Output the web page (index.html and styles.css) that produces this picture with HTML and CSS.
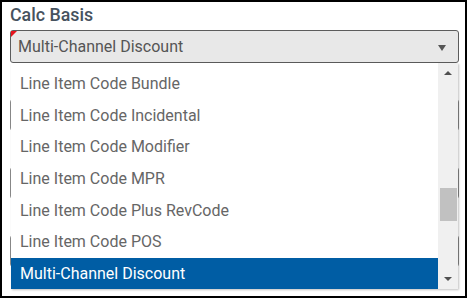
FILE: index.html
```html
<!DOCTYPE html>
<html>
<head>
    <title>Calc Basis</title>
    <link rel="stylesheet" href="styles.css">
</head>
<body>
    <div class="page">
        <div class="field-label">Calc Basis</div>
        <div class="select-wrap">
            <div class="select required">
                <span class="select-value">Multi-Channel Discount</span>
                <span class="caret"></span>
            </div>

            <!-- open option list, drawn over the fields below -->
            <div class="dropdown">
                <ul class="options">
                    <li>Line Item Code Bundle</li>
                    <li>Line Item Code Incidental</li>
                    <li>Line Item Code Modifier</li>
                    <li>Line Item Code MPR</li>
                    <li>Line Item Code Plus RevCode</li>
                    <li>Line Item Code POS</li>
                    <li class="selected">Multi-Channel Discount</li>
                </ul>
                <div class="scrollbar">
                    <span class="arrow-up"></span>
                    <div class="track"><div class="thumb"></div></div>
                    <span class="arrow-down"></span>
                </div>
            </div>
        </div>

        <!-- fields hidden behind the open list -->
        <div class="field">
            <div class="input required"></div>
        </div>
        <div class="field">
            <div class="input required"></div>
        </div>
        <div class="field">
            <div class="input required"></div>
        </div>
    </div>
</body>
</html>
```

FILE: styles.css
```css
html, body {
    margin: 0;
    height: 100%;
}
body {
    box-sizing: border-box;
    border: 2px solid #000;
    background: #fff;
    font-family: Roboto, "Liberation Sans", sans-serif;
    overflow: hidden;
}
.page {
    padding: 2px 6px 0 8px;
}
.field-label {
    font-size: 17.8px;
    font-weight: 500;
    color: #46525e;
    line-height: 22px;
    height: 22px;
    margin-bottom: 4px;
}
.select-wrap {
    position: relative;
}
.select {
    height: 31px;
    border: 1px solid #5c5c5c;
    border-radius: 3px;
    background: #e8e8e8;
    display: flex;
    align-items: center;
    justify-content: space-between;
    padding: 0 12px 0 7px;
    font-size: 16px;
    color: #555;
}
.required {
    position: relative;
}
.required::before {
    content: "";
    position: absolute;
    top: 0;
    left: 0;
    border-top: 6px solid #e5131d;
    border-right: 6px solid transparent;
}
.caret {
    width: 0;
    height: 0;
    border-left: 4.5px solid transparent;
    border-right: 4.5px solid transparent;
    border-top: 6px solid #555;
    margin-top: 2px;
}
.dropdown {
    position: absolute;
    top: 33px;
    left: 1px;
    right: 1px;
    height: 226px;
    background: #fff;
    display: flex;
    box-shadow: 1px 1px 2px rgba(0, 0, 0, 0.25);
    z-index: 2;
}
.options {
    flex: 1;
    list-style: none;
    margin: 0;
    padding: 5px 0 0 0;
    overflow: hidden;
}
.options li {
    height: 31.67px;
    line-height: 31.67px;
    padding-left: 9px;
    font-size: 16px;
    color: #666;
    white-space: nowrap;
}
.options li.selected {
    background: #005da4;
    color: #fff;
}
.scrollbar {
    width: 20px;
    background: #f0f0f0;
    display: flex;
    flex-direction: column;
    align-items: center;
}
.arrow-up, .arrow-down {
    width: 0;
    height: 0;
    border-left: 4px solid transparent;
    border-right: 4px solid transparent;
}
.arrow-up {
    border-bottom: 4px solid #505050;
    margin: 8px 0 0 0;
}
.arrow-down {
    border-top: 4px solid #505050;
    margin: 0 0 8px 0;
}
.track {
    flex: 1;
    width: 100%;
    position: relative;
}
.thumb {
    position: absolute;
    top: 113px;
    left: 2px;
    width: 17px;
    height: 33px;
    background: #c1c1c1;
}
.field {
    margin-top: 36px;
}
.input {
    height: 30px;
    border: 1px solid #8a8a8a;
    border-radius: 3px;
    background: #fff;
}
```
